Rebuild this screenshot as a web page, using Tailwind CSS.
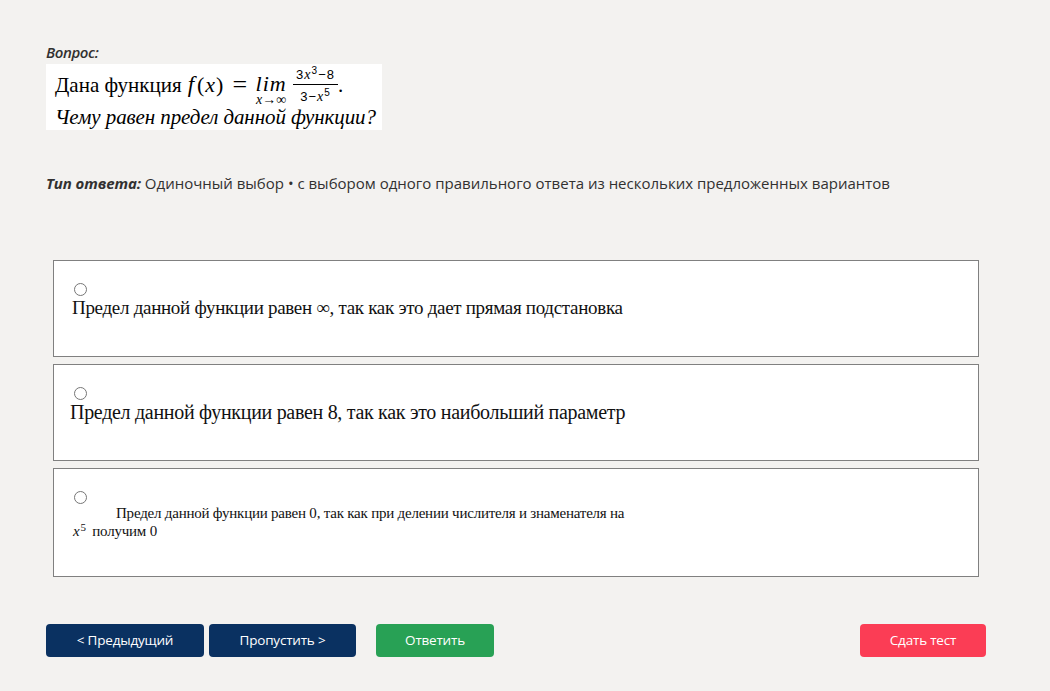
<!DOCTYPE html>
<html lang="ru">
<head>
    <meta charset="UTF-8">
    <title>Вопрос</title>
    <script src="https://cdn.jsdelivr.net/npm/@tailwindcss/browser@4"></script>
</head>
<body class="bg-[#f3f2f0] h-[691px] overflow-hidden font-['Open_Sans',sans-serif] text-[#323130]">
    <div class="pl-[46px] pr-[64px] pt-[43px]">
        <!-- вопрос -->
        <p class="text-[15px] leading-[19px] font-semibold italic tracking-[-0.4px]">Вопрос:</p>
        <div class="mt-[2px] w-[336px] h-[66px] bg-white pl-[9px] pt-[2px] font-['Liberation_Serif',serif] text-black">
            <div class="flex items-start h-[39px] text-[21px] leading-[28px] whitespace-nowrap">
                <span class="mt-[5px]">Дана функция</span>
                <span class="mt-[5px] ml-[6px] italic text-[23px]">f</span>
                <span class="mt-[5px] ml-[3px] text-[22px] tracking-[1px]">(<i>x</i>)</span>
                <span class="mt-[5px] ml-[8px] text-[26px]">=</span>
                <span class="ml-[7px] w-[34px] flex flex-col items-center">
                    <i class="text-[22px] leading-[19px] mt-[8px] tracking-[1px]">lim</i>
                    <span class="mt-[1px] text-[14px] leading-[12px] whitespace-nowrap"><i>x</i>→∞</span>
                </span>
                <span class="ml-[5px] flex flex-col items-center text-[13px] leading-[18px] tracking-[1px] font-['Liberation_Sans',sans-serif]">
                    <span class="border-b border-black px-[3px] h-[19px]">3<i class="font-['Liberation_Serif',serif] text-[14px]">x</i><sup class="text-[10px] leading-none">3</sup>−8</span>
                    <span class="mt-[3px]">3−<i class="font-['Liberation_Serif',serif] text-[14px]">x</i><sup class="text-[10px] leading-none">5</sup></span>
                </span>
                <span class="mt-[5px]">.</span>
            </div>
            <p class="text-[21px] leading-[24px] italic tracking-[-0.1px] whitespace-nowrap">Чему равен предел данной функции?</p>
        </div>

        <p class="mt-[43px] text-[15px] leading-[20px] whitespace-nowrap"><b class="font-bold italic tracking-[-0.1px]">Тип ответа:</b> Одиночный выбор • с выбором одного правильного ответа из нескольких предложенных вариантов</p>

        <!-- варианты -->
        <div class="mt-[67px] ml-[7px] w-[926px] flex flex-col gap-[7px] font-['Liberation_Serif',serif] text-[#111]">
            <label class="block h-[97px] bg-white border border-[#808080] pl-[18px] pt-[22px]">
                <span class="block ml-[2px] w-[13px] h-[13px] rounded-full border border-[#767676]"></span>
                <span class="block text-[19px] leading-[24px] tracking-[-0.3px] whitespace-nowrap">Предел данной функции равен ∞, так как это дает прямая подстановка</span>
            </label>
            <label class="block h-[97px] bg-white border border-[#808080] pl-[16px] pt-[22px]">
                <span class="block ml-[4px] w-[13px] h-[13px] rounded-full border border-[#767676]"></span>
                <span class="block text-[20px] leading-[24px] tracking-[-0.3px] whitespace-nowrap">Предел данной функции равен 8, так как это наибольший параметр</span>
            </label>
            <label class="block h-[109px] bg-white border border-[#808080] pl-[19px] pt-[22px]">
                <span class="block ml-[1px] w-[13px] h-[13px] rounded-full border border-[#767676]"></span>
                <span class="block text-[15px] leading-[18px] tracking-[-0.22px]">
                    <span class="block pl-[43px] whitespace-nowrap">Предел данной функции равен 0, так как при делении числителя и знаменателя на</span>
                    <span class="block whitespace-nowrap"><i>x</i><sup class="text-[11px] leading-none ml-[1px]">5</sup><span class="ml-[3px]"> получим 0</span></span>
                </span>
            </label>
        </div>

        <!-- кнопки -->
        <div class="mt-[47px] flex text-white text-[13.5px] tracking-[-0.2px]">
            <button class="w-[158px] h-[33px] rounded-[4px] bg-[#0a3161]">&lt; Предыдущий</button>
            <button class="ml-[5px] w-[147px] h-[33px] rounded-[4px] bg-[#0a3161]">Пропустить &gt;</button>
            <button class="ml-[20px] w-[118px] h-[33px] rounded-[4px] bg-[#28a155]">Ответить</button>
            <button class="ml-[366px] w-[126px] h-[33px] rounded-[4px] bg-[#fb3d55]">Сдать тест</button>
        </div>
    </div>
</body>
</html>
